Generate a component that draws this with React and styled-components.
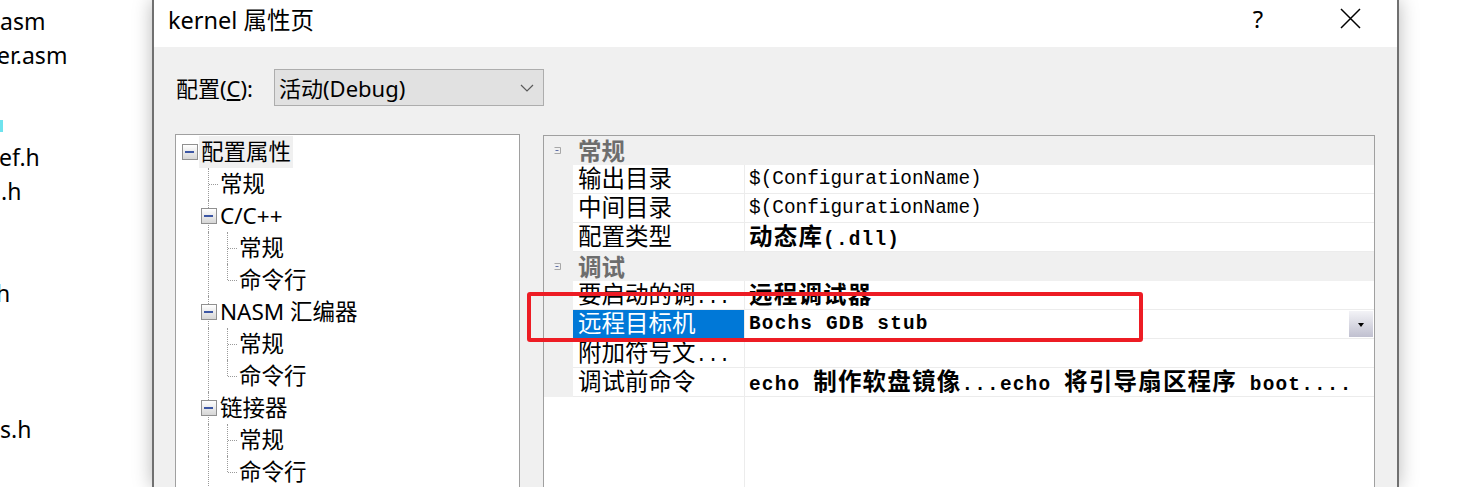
import React from "react";
import styled, { createGlobalStyle, css } from "styled-components";

const GlobalStyle = createGlobalStyle`
  html, body {
    margin: 0;
    padding: 0;
    background: #fff;
    overflow: hidden;
  }
`;

const sans = `"Noto Sans", "Noto Sans CJK SC", sans-serif`;
const han = `"Noto Sans CJK SC", sans-serif`;
const line = "#ececec";

const Page = styled.div`
  position: relative;
  display: flex;
  width: 1465px;
  height: 487px;
  overflow: hidden;
  background: #fff;
`;

// files list of the solution explorer, cut off by the dialog
const FileList = styled.div`
  width: 152px;
  flex-shrink: 0;
  padding-top: 4px;
  font-family: ${sans};
  font-size: 23px;
  line-height: 34px;
  color: #000;
  overflow: hidden;
  white-space: nowrap;
`;

const FileLine = styled.div`
  height: 34px;
  margin-left: ${(p) => p.$shift || 0}px;
`;

const CyanMark = styled.span`
  display: inline-block;
  width: 3px;
  height: 12px;
  background: #6fe3ee;
  vertical-align: middle;
`;

const Dialog = styled.div`
  position: relative;
  z-index: 1;
  width: 1247px;
  flex-shrink: 0;
  display: flex;
  flex-direction: column;
  box-sizing: border-box;
  border-left: 2px solid #707070;
  border-right: 2px solid #707070;
  background: #f0f0f0;
  box-shadow: 0 0 18px rgba(0, 0, 0, 0.28);
`;

const TitleBar = styled.div`
  height: 47px;
  flex-shrink: 0;
  display: flex;
  align-items: flex-start;
  background: #fff;
  font-family: ${sans};
  color: #000;
`;

const Title = styled.div`
  flex: 1;
  padding-left: 14px;
  font-size: 23.5px;
  line-height: 40px;
`;

const CaptionBtn = styled.div`
  width: ${(p) => p.$w}px;
  height: 37px;
  display: flex;
  align-items: center;
  justify-content: center;
  font-size: 24px;
`;

const Body = styled.div`
  flex: 1;
  min-height: 0;
  display: flex;
  flex-direction: column;
  padding: 22px 22px 0 21px;
`;

const ConfigRow = styled.div`
  display: flex;
  align-items: center;
  height: 37px;
  font-family: ${sans};
  font-size: 22px;
  line-height: 30px;
  color: #000;
`;

const ConfigLabel = styled.div`
  width: 99px;
  padding-left: 1px;
  box-sizing: border-box;
`;

const Select = styled.div`
  width: 270px;
  height: 37px;
  box-sizing: border-box;
  border: 1px solid #adadad;
  background: #e1e1e1;
  display: flex;
  align-items: center;
  justify-content: space-between;
  padding: 0 9px 0 4px;
`;

const Main = styled.div`
  margin-top: 28px;
  height: 380px;
  flex-shrink: 0;
  display: flex;
  gap: 23px;
`;

/* ---------- tree ---------- */

const Tree = styled.div`
  width: 345px;
  flex-shrink: 0;
  box-sizing: border-box;
  border: 1px solid #a0a0a0;
  background: #fff;
  padding: 1px 0 0 4px;
  font-family: ${sans};
  font-size: 22.5px;
  color: #000;
`;

const TreeRow = styled.div`
  display: flex;
  align-items: center;
  height: 32px;
  white-space: nowrap;
`;

const Col = styled.span`
  position: relative;
  width: 19px;
  height: 32px;
  flex-shrink: 0;
  display: flex;
  align-items: center;
  justify-content: center;
  ${(p) =>
    p.$v &&
    css`
      &::before {
        content: "";
        position: absolute;
        left: 9px;
        top: 0;
        height: ${p.$v === "half" ? "16px" : "32px"};
        border-left: 1px dotted #9a9a9a;
      }
    `}
  ${(p) =>
    p.$h &&
    css`
      &::after {
        content: "";
        position: absolute;
        left: 10px;
        right: 0;
        top: 16px;
        border-top: 1px dotted #9a9a9a;
      }
    `}
`;

const Box = styled.span`
  position: relative;
  z-index: 1;
  width: 16px;
  height: 16px;
  box-sizing: border-box;
  border: 1px solid #909090;
  background: linear-gradient(#ffffff, #d6d6d6);
  display: flex;
  align-items: center;
  justify-content: center;

  &::after {
    content: "";
    width: 9px;
    height: 2px;
    background: #3d57a4;
  }
`;

const TreeLabel = styled.span`
  display: inline-block;
  height: 32px;
  line-height: 32px;
  padding: 0 2px;
  background: ${(p) => (p.$selected ? "#f0f0f0" : "transparent")};
`;

const colKinds = {
  none: {},
  v: { v: "full" },
  tee: { v: "full", h: true },
  ell: { v: "half", h: true },
  box: { box: true },
  boxv: { v: "full", box: true },
};

const treeRows = [
  { text: "配置属性", cols: ["box"], selected: true },
  { text: "常规", cols: ["none", "tee"] },
  { text: "C/C++", cols: ["none", "boxv"] },
  { text: "常规", cols: ["none", "v", "tee"] },
  { text: "命令行", cols: ["none", "v", "ell"] },
  { text: "NASM 汇编器", cols: ["none", "boxv"] },
  { text: "常规", cols: ["none", "v", "tee"] },
  { text: "命令行", cols: ["none", "v", "ell"] },
  { text: "链接器", cols: ["none", "boxv"] },
  { text: "常规", cols: ["none", "v", "tee"] },
  { text: "命令行", cols: ["none", "v", "ell"] },
];

/* ---------- property grid ---------- */

const Grid = styled.div`
  flex: 1;
  min-width: 0;
  margin-top: 1px;
  display: flex;
  flex-direction: column;
  box-sizing: border-box;
  border: 1px solid #a0a0a0;
  background: #fff;
  color: #000;
`;

const PropRow = styled.div`
  display: flex;
  height: 29px;
  flex-shrink: 0;
  background: ${(p) => (p.$cat ? "#f0f0f0" : "#fff")};
`;

const Gutter = styled.div`
  width: 29px;
  flex-shrink: 0;
  box-sizing: border-box;
  padding-left: 9px;
  display: flex;
  align-items: center;
  background: #f0f0f0;
`;

const CatLabel = styled.div`
  padding-left: 5px;
  line-height: 28px;
  font-family: ${han};
  font-size: 23.5px;
  font-weight: 700;
  color: #6d6d6d;
`;

const NameCell = styled.div`
  width: 172px;
  flex-shrink: 0;
  box-sizing: border-box;
  padding-left: 5px;
  display: flex;
  align-items: center;
  white-space: nowrap;
  border-right: 1px solid ${line};
  border-bottom: 1px solid ${line};
  background: ${(p) => (p.$selected ? "#0078d7" : "#fff")};
  color: ${(p) => (p.$selected ? "#fff" : "#000")};
`;

const ValueCell = styled.div`
  flex: 1;
  min-width: 0;
  padding-left: 4px;
  display: flex;
  align-items: center;
  justify-content: space-between;
  white-space: nowrap;
  border-bottom: 1px solid ${line};
`;

const Filler = styled.div`
  flex: 1;
  margin-left: 200px;
  border-left: 1px solid ${line};
`;

const MonoText = styled.span`
  font-family: "Liberation Mono", monospace;
  font-size: 19.4px;
  line-height: 28px;
  font-weight: ${(p) => (p.$bold ? 700 : 400)};
  letter-spacing: ${(p) => (p.$bold ? "1.2px" : "0")};
`;

const Han = styled.span`
  font-family: ${han};
  font-size: 23.5px;
`;

const DropBtn = styled.div`
  width: 24px;
  height: 26px;
  margin-right: 1px;
  flex-shrink: 0;
  display: flex;
  align-items: center;
  justify-content: center;
  background: linear-gradient(#f3f3f7, #c0c0d0);

  &::after {
    content: "";
    margin-top: 2px;
    border-left: 3.5px solid transparent;
    border-right: 3.5px solid transparent;
    border-top: 4px solid #000;
  }
`;

const Annotation = styled.div`
  position: absolute;
  z-index: 2;
  left: 527px;
  top: 292px;
  width: 616px;
  height: 50px;
  box-sizing: border-box;
  border: 4px solid #ed1c24;
  border-radius: 3px;
`;

function Mixed({ text, bold }) {
  const parts = text.split(/([\u3400-\u9fff]+)/).filter(Boolean);
  return (
    <MonoText $bold={bold}>
      {parts.map((s, i) =>
        /[\u3400-\u9fff]/.test(s) ? <Han key={i}>{s}</Han> : <React.Fragment key={i}>{s}</React.Fragment>
      )}
    </MonoText>
  );
}

const CatIcon = () => (
  <svg width="9" height="9" viewBox="0 0 9 9">
    <path d="M1.5 1.5h6v6h-6" fill="none" stroke="#a8a8a8" />
    <path d="M2.5 4.5h3" stroke="#6070a8" />
  </svg>
);

const props = [
  { cat: "常规" },
  { name: "输出目录", value: "$(ConfigurationName)" },
  { name: "中间目录", value: "$(ConfigurationName)" },
  { name: "配置类型", value: "动态库(.dll)", bold: true },
  { cat: "调试" },
  { name: "要启动的调...", value: "远程调试器", bold: true },
  { name: "远程目标机", value: "Bochs GDB stub", bold: true, selected: true },
  { name: "附加符号文...", value: "" },
  { name: "调试前命令", value: "echo 制作软盘镜像...echo 将引导扇区程序 boot....", bold: true },
];

const files = [
  { text: "asm" },
  { text: "er.asm", shift: -3 },
  { text: "" },
  { cyan: true },
  { text: "ef.h", shift: -1 },
  { text: ".h", shift: 1 },
  { text: "" },
  { text: "" },
  { text: "h", shift: -4 },
  { text: "" },
  { text: "" },
  { text: "" },
  { text: "s.h" },
];

export default function App() {
  return (
    <Page>
      <GlobalStyle />
      <FileList>
        {files.map((f, i) => (
          <FileLine key={i} $shift={f.shift}>
            {f.cyan ? <CyanMark /> : f.text}
          </FileLine>
        ))}
      </FileList>

      <Dialog>
        <TitleBar>
          <Title>kernel 属性页</Title>
          <CaptionBtn $w={92}>?</CaptionBtn>
          <CaptionBtn $w={93}>
            <svg width="21" height="21" viewBox="0 0 21 21">
              <path d="M1 1L20 20M20 1L1 20" stroke="#000" strokeWidth="1.5" />
            </svg>
          </CaptionBtn>
        </TitleBar>

        <Body>
          <ConfigRow>
            <ConfigLabel>
              配置(<u>C</u>):
            </ConfigLabel>
            <Select>
              <span>活动(Debug)</span>
              <svg width="14" height="8" viewBox="0 0 14 8">
                <path d="M1 1l6 6 6-6" fill="none" stroke="#5a5a5a" strokeWidth="1.2" />
              </svg>
            </Select>
          </ConfigRow>

          <Main>
            <Tree>
              {treeRows.map((r, i) => (
                <TreeRow key={i}>
                  {r.cols.map((k, j) => {
                    const c = colKinds[k];
                    return (
                      <Col key={j} $v={c.v} $h={c.h}>
                        {c.box && <Box />}
                      </Col>
                    );
                  })}
                  <TreeLabel $selected={r.selected}>{r.text}</TreeLabel>
                </TreeRow>
              ))}
            </Tree>

            <Grid>
              {props.map((p, i) =>
                p.cat ? (
                  <PropRow key={i} $cat>
                    <Gutter>
                      <CatIcon />
                    </Gutter>
                    <CatLabel>{p.cat}</CatLabel>
                  </PropRow>
                ) : (
                  <PropRow key={i}>
                    <Gutter />
                    <NameCell $selected={p.selected}>
                      <Mixed text={p.name} />
                    </NameCell>
                    <ValueCell>
                      <Mixed text={p.value} bold={p.bold} />
                      {p.selected && <DropBtn />}
                    </ValueCell>
                  </PropRow>
                )
              )}
              <Filler />
            </Grid>
          </Main>
        </Body>
      </Dialog>

      <Annotation />
    </Page>
  );
}
